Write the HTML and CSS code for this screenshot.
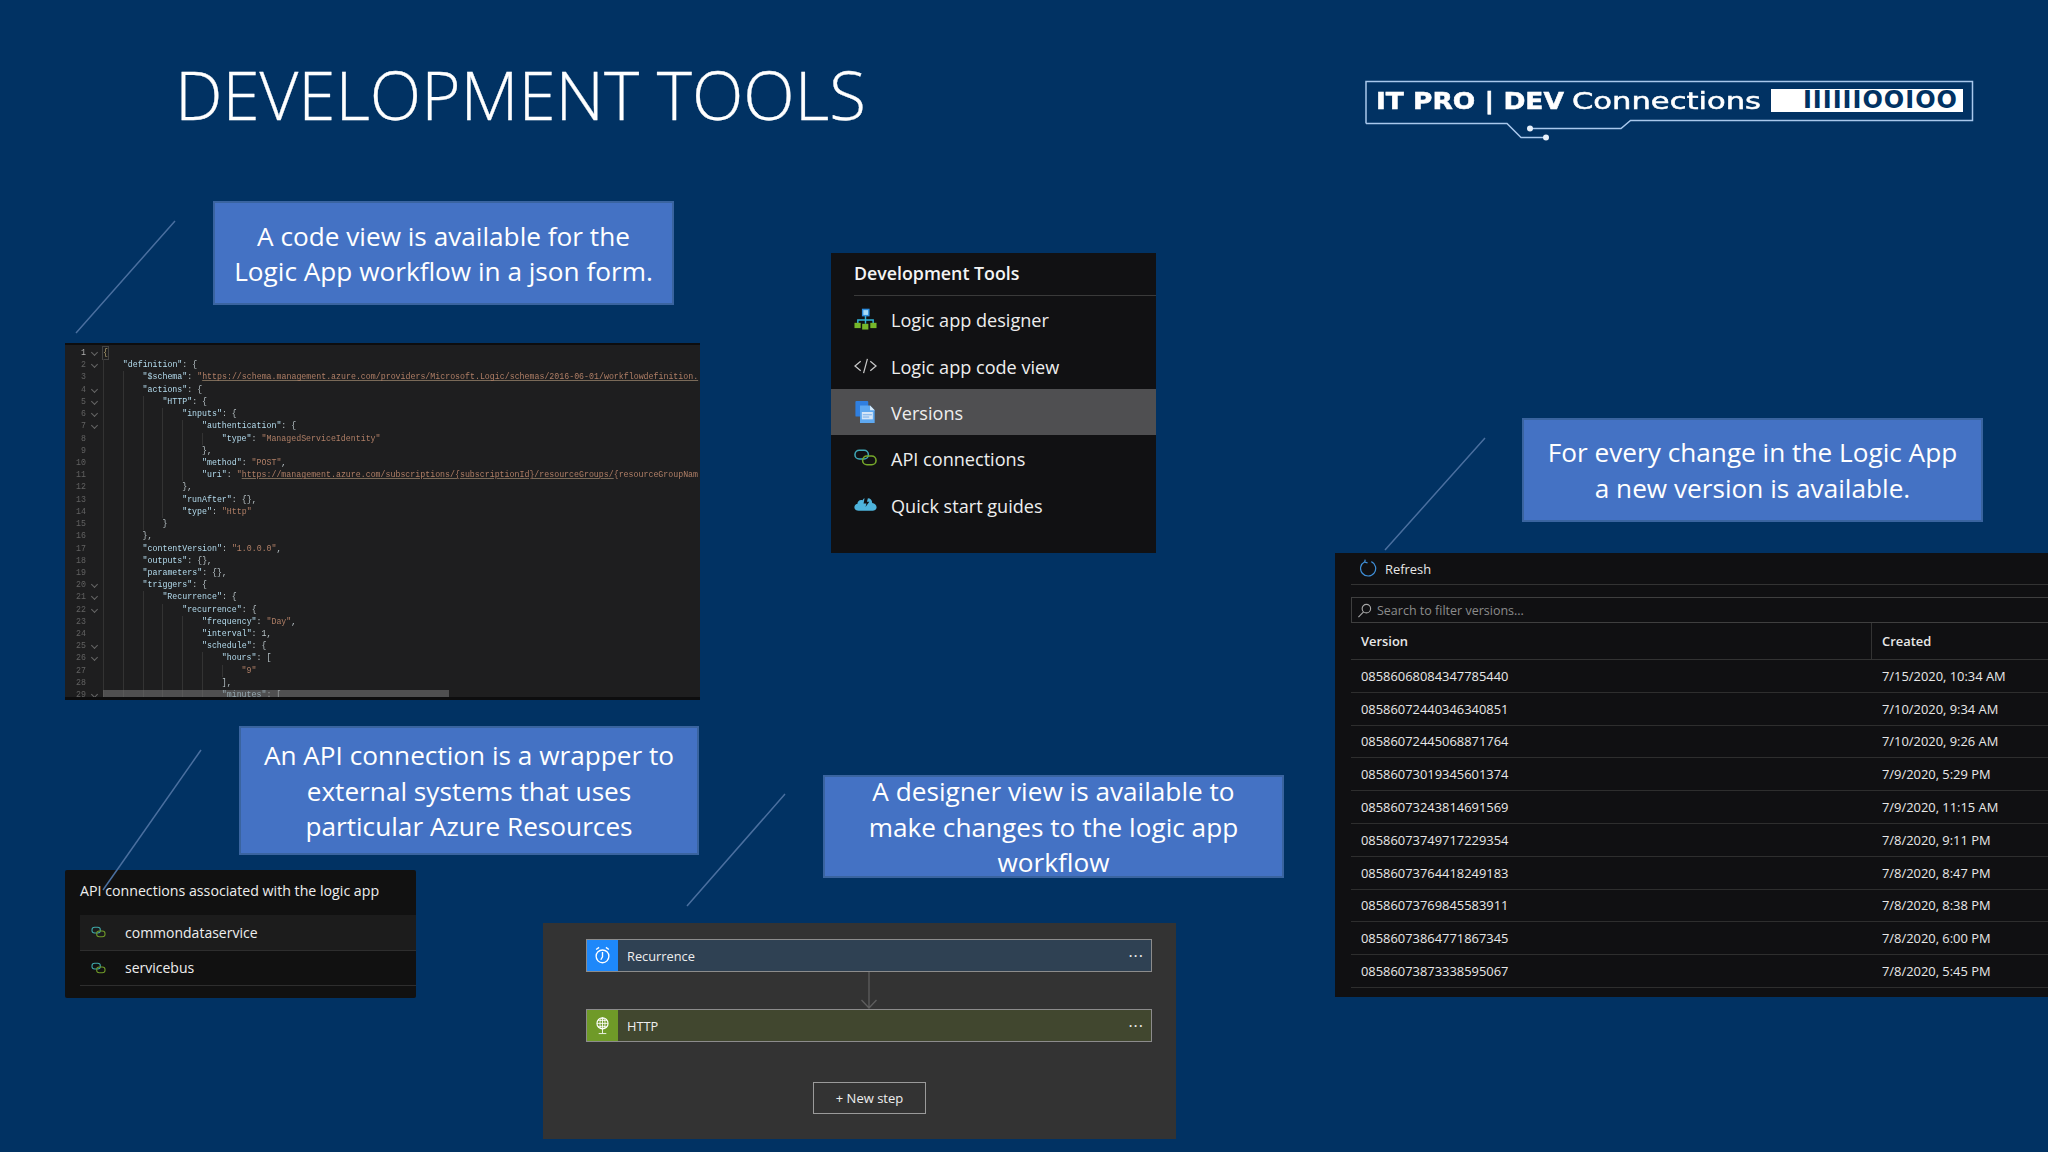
FILE: index.html
```html
<!DOCTYPE html>
<html lang="en">
<head>
<meta charset="utf-8">
<title>Development Tools</title>
<link rel="stylesheet" href="styles.css">
</head>
<body>
<main class="slide">
  <h1 class="title">DEVELOPMENT TOOLS</h1>

  <div class="logo">
    <svg class="logo-frame" viewBox="0 0 620 70" width="620" height="70">
      <path d="M4 43.500V1.500H610.500V40.500H268.500L259 48.500H168M4 43.500H145L159 57.500H184" fill="none" stroke="#a9c8ec" stroke-width="1.500"/>
      <circle cx="168" cy="48.500" r="3" fill="#e8f0fa"/>
      <circle cx="184" cy="57.500" r="3" fill="#e8f0fa"/>
    </svg>
    <span class="logo-name">IT PRO | DEV</span>
    <span class="logo-conn">Connections</span>
    <span class="logo-bits">IIIIIIOOIOO</span>
  </div>

  <svg class="leaders" viewBox="0 0 2048 1152" width="2048" height="1152">
    <path d="M175 221L76 333M785 794L687 906M1485 438L1385 550"/>
  </svg>

  <p class="callout c1">A code view is available for the<br>Logic App workflow in a json form.</p>
  <p class="callout c2">An API connection is a wrapper to<br>external systems that uses<br>particular Azure Resources</p>
  <p class="callout c3">A designer view is available to<br>make changes to the logic app<br>workflow</p>
  <p class="callout c4">For every change in the Logic App<br>a new version is available.</p>

  <section class="code">
    <div class="ln first"><b>1</b><u></u><span class="p">{</span></div>
    <div class="ln"><b>2</b><u></u><i></i><span class="k">"definition"</span>: {</div>
    <div class="ln"><b>3</b><s></s><i></i><i></i><span class="k">"$schema"</span>: <span class="v">"<span class="url">https://schema.management.azure.com/providers/Microsoft.Logic/schemas/2016-06-01/workflowdefinition.</span></span></div>
    <div class="ln"><b>4</b><u></u><i></i><i></i><span class="k">"actions"</span>: {</div>
    <div class="ln"><b>5</b><u></u><i></i><i></i><i></i><span class="k">"HTTP"</span>: {</div>
    <div class="ln"><b>6</b><u></u><i></i><i></i><i></i><i></i><span class="k">"inputs"</span>: {</div>
    <div class="ln"><b>7</b><u></u><i></i><i></i><i></i><i></i><i></i><span class="k">"authentication"</span>: {</div>
    <div class="ln"><b>8</b><s></s><i></i><i></i><i></i><i></i><i></i><i></i><span class="k">"type"</span>: <span class="v">"ManagedServiceIdentity"</span></div>
    <div class="ln"><b>9</b><s></s><i></i><i></i><i></i><i></i><i></i>},</div>
    <div class="ln"><b>10</b><s></s><i></i><i></i><i></i><i></i><i></i><span class="k">"method"</span>: <span class="v">"POST"</span>,</div>
    <div class="ln"><b>11</b><s></s><i></i><i></i><i></i><i></i><i></i><span class="k">"uri"</span>: <span class="v">"<span class="url">https://management.azure.com/subscriptions/{subscriptionId}/resourceGroups/</span>{resourceGroupNam</span></div>
    <div class="ln"><b>12</b><s></s><i></i><i></i><i></i><i></i>},</div>
    <div class="ln"><b>13</b><s></s><i></i><i></i><i></i><i></i><span class="k">"runAfter"</span>: {},</div>
    <div class="ln"><b>14</b><s></s><i></i><i></i><i></i><i></i><span class="k">"type"</span>: <span class="v">"Http"</span></div>
    <div class="ln"><b>15</b><s></s><i></i><i></i><i></i>}</div>
    <div class="ln"><b>16</b><s></s><i></i><i></i>},</div>
    <div class="ln"><b>17</b><s></s><i></i><i></i><span class="k">"contentVersion"</span>: <span class="v">"1.0.0.0"</span>,</div>
    <div class="ln"><b>18</b><s></s><i></i><i></i><span class="k">"outputs"</span>: {},</div>
    <div class="ln"><b>19</b><s></s><i></i><i></i><span class="k">"parameters"</span>: {},</div>
    <div class="ln"><b>20</b><u></u><i></i><i></i><span class="k">"triggers"</span>: {</div>
    <div class="ln"><b>21</b><u></u><i></i><i></i><i></i><span class="k">"Recurrence"</span>: {</div>
    <div class="ln"><b>22</b><u></u><i></i><i></i><i></i><i></i><span class="k">"recurrence"</span>: {</div>
    <div class="ln"><b>23</b><s></s><i></i><i></i><i></i><i></i><i></i><span class="k">"frequency"</span>: <span class="v">"Day"</span>,</div>
    <div class="ln"><b>24</b><s></s><i></i><i></i><i></i><i></i><i></i><span class="k">"interval"</span>: 1,</div>
    <div class="ln"><b>25</b><u></u><i></i><i></i><i></i><i></i><i></i><span class="k">"schedule"</span>: {</div>
    <div class="ln"><b>26</b><u></u><i></i><i></i><i></i><i></i><i></i><i></i><span class="k">"hours"</span>: [</div>
    <div class="ln"><b>27</b><s></s><i></i><i></i><i></i><i></i><i></i><i></i><i></i><span class="v">"9"</span></div>
    <div class="ln"><b>28</b><s></s><i></i><i></i><i></i><i></i><i></i><i></i>],</div>
    <div class="ln"><b>29</b><u></u><i></i><i></i><i></i><i></i><i></i><i></i><span class="k">"minutes"</span>: [</div>
    <div class="scrollbar"></div>
  </section>

  <nav class="tools">
    <h2 class="tools-head">Development Tools</h2>
    <a class="tool">
      <svg class="tool-icon" viewBox="0 0 24 22"><path d="M12 7V12M4 16V12H20V16M12 12V16" fill="none" stroke="#32b4d8" stroke-width="1.500"/><rect x="9" y="1" width="6.500" height="6.500" fill="#a8dcf8" stroke="#2f8fe0" stroke-width="1.500"/><rect x="0.500" y="15" width="6.500" height="5.500" fill="#76b82a"/><rect x="8.500" y="16" width="6.500" height="6" fill="#76b82a"/><rect x="17" y="15" width="6.500" height="5.500" fill="#76b82a"/></svg>
      <span>Logic app designer</span>
    </a>
    <a class="tool">
      <svg class="tool-icon" viewBox="0 0 24 22"><path d="M7 6L1 11L7 16M17 6L23 11L17 16M14 3.500L10 18.500" fill="none" stroke="#c8c8c8" stroke-width="1.300"/></svg>
      <span>Logic app code view</span>
    </a>
    <a class="tool active">
      <svg class="tool-icon" viewBox="0 0 24 24"><rect x="1" y="0" width="14" height="17" rx="1" fill="#2f7fe0"/><path d="M6 5H17L22 10V24H6Z" fill="#5ea8f0"/><path d="M17 5L22 10H17Z" fill="#d8ecfc"/><rect x="8" y="12" width="12" height="8" fill="#d5e6f8"/><path d="M9 15H19M9 17.500H16" stroke="#6fa8e8"/></svg>
      <span>Versions</span>
    </a>
    <a class="tool">
      <svg class="tool-icon" viewBox="0 0 24 20"><rect x="1" y="2" width="14" height="9" rx="4.500" fill="none" stroke="#3fa8b8" stroke-width="1.600"/><rect x="9" y="8" width="14" height="9" rx="4.500" fill="none" stroke="#76a82a" stroke-width="1.600"/></svg>
      <span>API connections</span>
    </a>
    <a class="tool">
      <svg class="tool-icon" viewBox="0 0 24 20"><path d="M5 16C1.500 16 0 14 .5 11.500C1 9.500 2.500 9 3.500 9C3.500 6 6 4 9 5C9.500 4 10 3.500 11 3L10 8.500H13L12 12L16 6.500H13.500L14.500 3C17 3 19 5 19 8C22 8.500 24 10.500 23.500 13C23 15 21.500 16 19.500 16Z" fill="#4eb4dc"/></svg>
      <span>Quick start guides</span>
    </a>
  </nav>

  <section class="versions">
    <div class="refresh">
      <svg class="refresh-icon" viewBox="0 0 18 20"><path d="M5 2.800A8 8 0 1 0 12 2.700M5.500 0.500L5 3.200L8 4" fill="none" stroke="#3f8fd8" stroke-width="1.300"/></svg>
      <span>Refresh</span>
    </div>
    <div class="filter">
      <svg class="search-icon" viewBox="0 0 16 16"><circle cx="10" cy="6" r="4.500" fill="none" stroke="#a8a8a8" stroke-width="1.200"/><path d="M7 9.500L1.500 15" stroke="#a8a8a8" stroke-width="1.200"/></svg>
      <span>Search to filter versions...</span>
    </div>
    <div class="v-head"><span>Version</span><span class="v-created">Created</span></div>
    <div class="v-row"><span>08586068084347785440</span><span>7/15/2020, 10:34 AM</span></div>
    <div class="v-row"><span>08586072440346340851</span><span>7/10/2020, 9:34 AM</span></div>
    <div class="v-row"><span>08586072445068871764</span><span>7/10/2020, 9:26 AM</span></div>
    <div class="v-row"><span>08586073019345601374</span><span>7/9/2020, 5:29 PM</span></div>
    <div class="v-row"><span>08586073243814691569</span><span>7/9/2020, 11:15 AM</span></div>
    <div class="v-row"><span>08586073749717229354</span><span>7/8/2020, 9:11 PM</span></div>
    <div class="v-row"><span>08586073764418249183</span><span>7/8/2020, 8:47 PM</span></div>
    <div class="v-row"><span>08586073769845583911</span><span>7/8/2020, 8:38 PM</span></div>
    <div class="v-row"><span>08586073864771867345</span><span>7/8/2020, 6:00 PM</span></div>
    <div class="v-row"><span>08586073873338595067</span><span>7/8/2020, 5:45 PM</span></div>
  </section>

  <section class="api">
    <h2 class="api-head">API connections associated with the logic app</h2>
    <div class="api-row shade">
      <svg class="api-icon" viewBox="0 0 16 12"><rect x="1" y="1" width="9" height="6" rx="3" fill="none" stroke="#3fa8a8" stroke-width="1.100"/><rect x="6" y="5" width="9" height="6" rx="3" fill="none" stroke="#6f9a28" stroke-width="1.100"/></svg>
      <span>commondataservice</span>
    </div>
    <div class="api-row">
      <svg class="api-icon" viewBox="0 0 16 12"><rect x="1" y="1" width="9" height="6" rx="3" fill="none" stroke="#3fa8a8" stroke-width="1.100"/><rect x="6" y="5" width="9" height="6" rx="3" fill="none" stroke="#6f9a28" stroke-width="1.100"/></svg>
      <span>servicebus</span>
    </div>
  </section>

  <svg class="leaders over" viewBox="0 0 2048 1152" width="2048" height="1152">
    <path d="M201 750L103 890"/>
  </svg>

  <section class="designer">
    <div class="step blue">
      <span class="step-icon"><svg viewBox="0 0 20 22" width="17" height="19"><circle cx="10" cy="12" r="7.500" fill="none" stroke="#fff" stroke-width="1.600"/><path d="M10 7V12.500L8 16M2.500 4L6 1.500M17.500 4L14 1.500" fill="none" stroke="#fff" stroke-width="1.600"/></svg></span>
      <span class="step-name">Recurrence</span>
      <span class="step-more">···</span>
    </div>
    <div class="arrow"><svg viewBox="0 0 20 37" width="20" height="37"><path d="M10 0V36M2.500 28L10 36L17.500 28" fill="none" stroke="#5e5e5e" stroke-width="1.300"/></svg></div>
    <div class="step green">
      <span class="step-icon"><svg viewBox="0 0 20 22" width="17" height="19"><circle cx="10" cy="8.500" r="6.500" fill="none" stroke="#fff" stroke-width="1.400"/><path d="M3.500 8.500H16.500M10 2V15M5 5H15M5 12H15M10 15V20M5.500 20.500H14.500" fill="none" stroke="#fff" stroke-width="1"/><ellipse cx="10" cy="8.500" rx="3" ry="6.500" fill="none" stroke="#fff"/></svg></span>
      <span class="step-name">HTTP</span>
      <span class="step-more">···</span>
    </div>
    <button class="new-step">+ New step</button>
  </section>
</main>
</body>
</html>
```

FILE: styles.css
```css
* { box-sizing: border-box; }
html, body { margin: 0; padding: 0; }
body { width: 2048px; height: 1152px; overflow: hidden; background: #013263; font-family: "Open Sans", "Noto Sans", sans-serif; }
.slide { position: relative; width: 2048px; height: 1152px; overflow: hidden; color: #fff; }

.title { position: absolute; left: 175px; top: 48px; margin: 0; font-size: 67.200px; line-height: 92px; font-weight: 300; color: #fff; white-space: nowrap; -webkit-text-stroke: .3px #fff; }

.logo { position: absolute; left: 1362px; top: 80px; width: 620px; height: 70px; }
.logo-frame { position: absolute; left: 0; top: 0; }
.logo-name, .logo-conn { position: absolute; top: 8px; font-family: "DejaVu Sans", sans-serif; font-size: 23px; line-height: 26px; white-space: nowrap; color: #fff; transform-origin: left center; }
.logo-name { left: 14px; font-weight: 700; -webkit-text-stroke: .5px #fff; transform: scaleX(1.150); }
.logo-conn { left: 210px; font-weight: 400; -webkit-text-stroke: .5px #fff; transform: scaleX(1.330); }
.logo-bits { position: absolute; left: 409px; top: 9px; width: 192px; height: 23px; padding-right: 5px; background: #fff; color: #013263; font-family: "DejaVu Sans", sans-serif; font-weight: 700; font-size: 24px; line-height: 23px; letter-spacing: 1px; text-align: right; white-space: nowrap; }

.leaders { position: absolute; left: 0; top: 0; pointer-events: none; }
.leaders path { fill: none; stroke: #4a6f9f; stroke-width: 1.500; }
.leaders.over { z-index: 3; }

.callout { position: absolute; margin: 0; padding-top: 2px; display: flex; align-items: center; justify-content: center; text-align: center; background: #4472c4; border: 2px solid #3a649f; color: #fff; font-size: 26.200px; line-height: 35.500px; white-space: nowrap; }
.c1 { left: 213px; top: 201px; width: 461px; height: 104px; }
.c2 { left: 239px; top: 726px; width: 460px; height: 129px; }
.c3 { left: 823px; top: 775px; width: 461px; height: 103px; padding-top: 2px; }
.c4 { left: 1522px; top: 418px; width: 461px; height: 104px; padding-top: 1px; }

.code { position: absolute; left: 65px; top: 343px; width: 635px; height: 357px; padding-top: 2px; overflow: hidden; background: #1e1e1f; border-top: 2px solid #0d0d0e; border-bottom: 3px solid #0d0d0e; font-family: "Liberation Mono", monospace; font-size: 8.270px; color: #b9c4c8; filter: blur(.3px); }
.ln { display: flex; height: 12.230px; line-height: 12.230px; white-space: pre; }
.ln b { flex: none; width: 21px; text-align: right; font-weight: 400; color: #626262; }
.first b { color: #b0b0b0; }
.ln u, .ln s { flex: none; display: block; width: 17px; text-decoration: none; position: relative; }
.ln u::after { content: ""; position: absolute; left: 6px; top: 3px; width: 4px; height: 4px; border-right: 1px solid #666; border-bottom: 1px solid #666; transform: rotate(45deg); }
.ln i { flex: none; display: block; width: 19.800px; border-left: 1px solid #333; }
.p { color: #b0a070; outline: 1px solid #444; }
.k { color: #b4dcee; }
.v { color: #b07f66; }
.url { text-decoration: underline; text-decoration-color: #7a6a58; }
.scrollbar { position: absolute; left: 38px; top: 345px; width: 346px; height: 7px; background: rgba(120,120,120,.55); }

.tools { position: absolute; left: 831px; top: 253px; width: 325px; height: 300px; display: flex; flex-direction: column; padding-top: 9px; background: #111113; color: #f0f0f0; }
.tools-head { margin: 0 0 0 23px; padding-bottom: 10px; box-sizing: content-box; height: 23px; font-size: 17.800px; line-height: 23px; font-weight: 600; color: #f4f4f4; border-bottom: 1px solid #3a3a3a; }
.tool { display: flex; align-items: center; gap: 14px; height: 46.400px; padding: 2px 0 0 23px; font-size: 18.100px; color: #eee; }
.tool.active { background: #4f4f51; }
.tool-icon { flex: none; width: 23px; height: 22px; margin-top: -2px; }

.versions { position: absolute; left: 1335px; top: 553px; width: 713px; height: 444px; padding-left: 16px; background: #101012; font-size: 12.900px; color: #e8e8e8; }
.refresh { display: flex; align-items: center; gap: 8px; height: 32px; padding-left: 9px; border-bottom: 1px solid #333; }
.refresh-icon { width: 17px; height: 19px; }
.filter { display: flex; align-items: center; gap: 5px; height: 26px; margin-top: 12px; padding-left: 5px; border: 1px solid #3f3f3f; border-right: 0; color: #8c8c8c; font-size: 12.500px; }
.search-icon { width: 15px; height: 15px; }
.v-head { display: grid; grid-template-columns: 510px 1fr; height: 37px; align-items: center; padding-left: 10px; font-weight: 600; border-bottom: 1px solid #333; }
.v-created { display: flex; align-items: center; height: 100%; padding-left: 10px; border-left: 1px solid #333; }
.v-row { display: grid; grid-template-columns: 510px 1fr; height: 32.800px; padding-left: 10px; align-items: center; border-bottom: 1px solid #2e2e2e; }
.v-row span:last-child { padding-left: 11px; }

.api { position: absolute; left: 65px; top: 870px; width: 351px; height: 128px; padding: 10px 0 0 15px; border-radius: 2px; background: #111111; color: #eee; }
.api-head { margin: 0 0 13px; font-size: 14.200px; line-height: 22px; font-weight: 400; white-space: nowrap; }
.api-row { display: flex; align-items: center; gap: 19px; height: 35.500px; padding-left: 11px; font-size: 14px; border-bottom: 1px solid #2e2e2e; }
.api-row.shade { background: #1c1c1c; }
.api-icon { width: 15px; height: 12px; flex: none; }

.designer { position: absolute; left: 543px; top: 923px; width: 633px; height: 216px; padding: 16px 24px 0 43px; background: #333333; display: flex; flex-direction: column; color: #eee; }
.step { display: flex; align-items: center; height: 33px; border: 1px solid #8c8c8c; font-size: 12.800px; }
.step.blue { background: #2f4153; }
.step.green { background: #41472f; }
.step-icon { flex: none; display: flex; align-items: center; justify-content: center; width: 31px; height: 100%; }
.blue .step-icon { background: #1e88fa; }
.green .step-icon { background: #6f9a28; }
.step-name { flex: 1; padding-left: 9px; }
.step-more { padding-right: 7px; font-size: 16px; line-height: 1; font-weight: 400; letter-spacing: 1px; }
.arrow { display: flex; justify-content: center; height: 37px; margin: 0 0 0 -1px; }
.new-step { align-self: center; margin: 40px 0 0 1px; width: 113px; height: 32px; padding: 0; background: transparent; border: 1px solid #9a9a9a; color: #eee; font: 400 13px "Open Sans", sans-serif; }
```
